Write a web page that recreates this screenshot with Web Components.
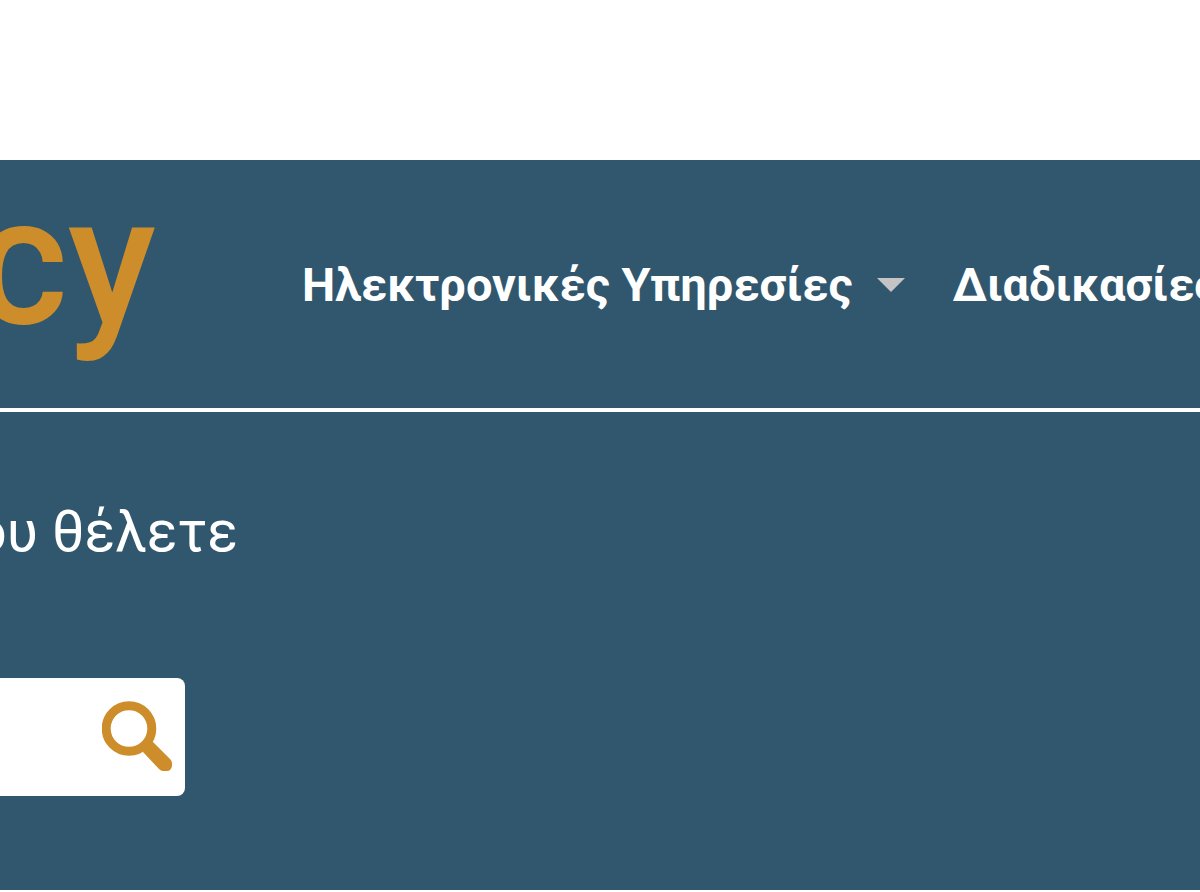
<!DOCTYPE html>
<html lang="el">
<head>
<meta charset="utf-8">
<title>Αρχική</title>
<style>
  body {
    margin: 0;
    padding-top: 160px;
    overflow-x: hidden;
    background: #fff;
    color: #fff;
    font-family: Roboto, "Noto Sans", sans-serif;
    --color-primary: #30576e;
    --color-accent: #cd8d2a;
  }
</style>
</head>
<body>
<site-header>
  <site-logo slot="logo">cy</site-logo>
  <nav-item href="#services" menu>Ηλεκτρονικές Υπηρεσίες</nav-item>
  <nav-item href="#procedures">Διαδικασίες</nav-item>
</site-header>
<search-hero>
  <span slot="title">ου θέλετε</span>
  <search-box></search-box>
</search-hero>

<script>
class SiteHeader extends HTMLElement {
  constructor() {
    super();
    this.attachShadow({ mode: "open" });
    this.shadowRoot.innerHTML = `
    <style>
        :host {
            display: block;
            overflow: hidden;
            background: var(--color-primary);
            border-bottom: 4px solid white;
        }

        header {
            display: flex;
            align-items: center;
            gap: 144px;
            height: 248px;
        }

        nav {
            display: flex;
            gap: 48px;
            padding: 2px 0 0 2px;
        }
    </style>
    <header>
      <slot name="logo"></slot>
      <nav><slot></slot></nav>
    </header>
    `;
  }
}

class SiteLogo extends HTMLElement {
  constructor() {
    super();
    this.attachShadow({ mode: "open" });
    this.shadowRoot.innerHTML = `
    <style>
        :host {
            display: flex;
            flex: none;
            justify-content: flex-end;
            width: 156px;
            padding-bottom: 44px;
        }

        a {
            color: var(--color-accent);
            font-size: 180px;
            font-weight: 500;
            line-height: 200px;
            text-decoration: none;
        }
    </style>
    <a href="#"><slot></slot></a>
    `;
  }
}

class NavItem extends HTMLElement {
  constructor() {
    super();
    this.attachShadow({ mode: "open" });
    this.shadowRoot.innerHTML = `
    <style>
        :host {
            display: block;
            flex: none;
        }

        a {
            display: flex;
            align-items: center;
            gap: 24px;
            color: inherit;
            font-size: 47px;
            font-weight: 700;
            line-height: 56px;
            white-space: nowrap;
            text-decoration: none;
        }

        svg {
            display: none;
        }

        :host([menu]) svg {
            display: block;
        }
    </style>
    <a><slot></slot>
      <svg width="28" height="14" viewBox="0 0 28 14" aria-hidden="true"><path d="M0 0h28L14 14z" fill="#c4c4c4"/></svg>
    </a>
    `;
  }

  connectedCallback() {
    this.shadowRoot.querySelector("a").href = this.getAttribute("href");
  }
}

class SearchHero extends HTMLElement {
  constructor() {
    super();
    this.attachShadow({ mode: "open" });
    this.shadowRoot.innerHTML = `
    <style>
        :host {
            display: block;
            overflow: hidden;
            padding: 88px 0 94px;
            background: var(--color-primary);
        }

        h1 {
            display: flex;
            justify-content: flex-end;
            width: 238px;
            margin: 0 0 114px;
            font-size: 57px;
            font-weight: 400;
            line-height: 64px;
            white-space: nowrap;
        }
    </style>
    <h1><slot name="title"></slot></h1>
    <slot></slot>
    `;
  }
}

class SearchBox extends HTMLElement {
  constructor() {
    super();
    this.attachShadow({ mode: "open" });
    this.shadowRoot.innerHTML = `
    <style>
        :host {
            display: block;
            width: 185px;
        }

        form {
            display: flex;
            align-items: center;
            height: 118px;
            margin: 0;
            background: white;
            border-radius: 0 8px 8px 0;
        }

        input {
            flex: 1;
            min-width: 0;
            height: 100%;
            padding: 0;
            border: 0;
            outline: 0;
            background: none;
            font: 400 48px Roboto, sans-serif;
        }

        button {
            padding: 0 13px 2px 0;
            border: 0;
            background: none;
            cursor: pointer;
        }

        svg {
            display: block;
        }
    </style>
    <form role="search">
      <input type="text" aria-label="Αναζήτηση">
      <button type="submit" aria-label="Αναζήτηση">
        <svg width="70" height="70" viewBox="0 0 70 70">
          <circle cx="27" cy="27.5" r="22.8" fill="none" stroke="#cd8d2a" stroke-width="9"/>
          <path d="M50 40l18 18q2 2 2 4v3q-1 5-5 5h-4q-2 0-4-2L41 51l2-6z" fill="#cd8d2a"/>
        </svg>
      </button>
    </form>
    `;
  }
}

customElements.define("site-header", SiteHeader);
customElements.define("site-logo", SiteLogo);
customElements.define("nav-item", NavItem);
customElements.define("search-hero", SearchHero);
customElements.define("search-box", SearchBox);
</script>
</body>
</html>
